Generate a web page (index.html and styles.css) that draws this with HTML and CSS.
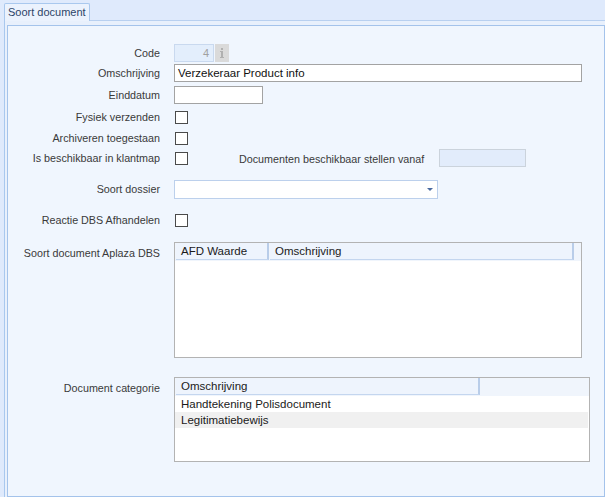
FILE: index.html
```html
<!DOCTYPE html>
<html>
<head>
<meta charset="utf-8">
<link rel="stylesheet" href="styles.css">
</head>
<body>
<div class="tabstrip"><div class="tab">Soort document</div></div>
<div class="outer">
  <div class="panel">
    <div class="row r1">
      <span class="lbl">Code</span>
      <span class="code-input">4</span>
      <span class="info-btn"><svg width="6" height="12" viewBox="0 0 6 12"><rect x="2" y="1" width="2" height="2" fill="#b0b0b0"/><rect x="2" y="4" width="2" height="7" fill="#b0b0b0"/><rect x="1" y="4" width="1" height="1" fill="#b0b0b0"/><rect x="1" y="10" width="4" height="1" fill="#b0b0b0"/></svg></span>
    </div>
    <div class="row r2">
      <span class="lbl">Omschrijving</span>
      <span class="input wide">Verzekeraar Product info</span>
    </div>
    <div class="row r3">
      <span class="lbl">Einddatum</span>
      <span class="input date"></span>
    </div>
    <div class="row r4">
      <span class="lbl">Fysiek verzenden</span>
      <span class="check"></span>
    </div>
    <div class="row r5">
      <span class="lbl">Archiveren toegestaan</span>
      <span class="check"></span>
    </div>
    <div class="row r6">
      <span class="lbl">Is beschikbaar in klantmap</span>
      <span class="check"></span>
      <span class="lbl2">Documenten beschikbaar stellen vanaf</span>
      <span class="input vanaf"></span>
    </div>
    <div class="row r7">
      <span class="lbl">Soort dossier</span>
      <span class="combo"><span class="arrow"></span></span>
    </div>
    <div class="row r8">
      <span class="lbl">Reactie DBS Afhandelen</span>
      <span class="check"></span>
    </div>
    <div class="row top r9">
      <span class="lbl">Soort document Aplaza DBS</span>
      <div class="grid grid-afd">
        <div class="ghead">
          <span class="hcell c-afd">AFD Waarde</span>
          <span class="hcell c-oms">Omschrijving</span>
        </div>
      </div>
    </div>
    <div class="row top r10">
      <span class="lbl">Document categorie</span>
      <div class="grid grid-cat">
        <div class="ghead">
          <span class="hcell c-cat">Omschrijving</span>
        </div>
        <div class="grow">Handtekening Polisdocument</div>
        <div class="grow alt">Legitimatiebewijs</div>
      </div>
    </div>
  </div>
</div>
</body>
</html>
```

FILE: styles.css
```css
* { box-sizing: border-box; }

body {
  margin: 0;
  width: 605px;
  height: 497px;
  overflow: hidden;
  background: #dfeafc;
  font-family: "Liberation Sans", Arial, sans-serif;
  font-size: 11px;
  color: #3a3a3a;
}

.tabstrip {
  height: 20px;
  padding-left: 4px;
  display: flex;
  align-items: flex-end;
}

.tab {
  position: relative;
  z-index: 1;
  width: 86px;
  height: 18px;
  margin-bottom: -1px;
  border: 1px solid #a9c8ee;
  border-bottom: none;
  border-radius: 2px 2px 0 0;
  background: #ebf2fd;
  padding-left: 3px;
  padding-top: 1px;
  line-height: 15px;
  color: #2b4468;
}

.outer {
  margin-left: 4px;
  height: 477px;
  border-top: 1px solid #b8d0f0;
  border-left: 1px solid #a9c8ee;
  padding: 4px 0 0 2px;
  background: #e8f0fc;
}

.panel {
  width: 598px;
  height: 472px;
  border: 1px solid #a4c3eb;
  background: #f0f6fe;
  padding-top: 17px;
  display: flex;
  flex-direction: column;
}

.row {
  display: flex;
  align-items: center;
  height: 20px;
  flex: none;
}

.row.top { align-items: flex-start; }

.lbl {
  width: 152px;
  margin-right: 14px;
  text-align: right;
  white-space: nowrap;
  line-height: 13px;
  font-size: 10.75px;
  padding-top: 1px;
}

.row.top .lbl { padding-top: 5px; }

.r3 { margin-top: 2px; }
.r4 { margin-top: 2px; }
.r5 { margin-top: 1px; }
.r7 { margin-top: 11px; }
.r8 { margin-top: 11px; }
.r9 { margin-top: 12px; height: 116px; }
.r10 { margin-top: 19px; height: 85px; }

.code-input {
  width: 40px;
  height: 18px;
  border: 1px solid #c9d9ef;
  background: #e3eefc;
  color: #a0a0a0;
  text-align: right;
  padding-right: 4px;
  line-height: 16px;
}

.info-btn {
  width: 14px;
  height: 18px;
  margin-left: 1px;
  background: #dadada;
  display: flex;
  align-items: center;
  justify-content: center;
}

.input {
  height: 18px;
  border: 1px solid #a3a3a3;
  background: #fff;
  color: #111;
  padding-left: 3px;
  line-height: 16px;
  font-size: 11.5px;
}

.wide { width: 408px; }
.date { width: 89px; }

.input.vanaf {
  width: 87px;
  border-color: #cbd3dc;
  background: #e2ecfb;
}

.check {
  width: 13px;
  height: 13px;
  margin-left: 1px;
  border: 1px solid #4a4a4a;
  background: #fff;
}

.lbl2 {
  margin-left: 51px;
  width: 200px;
  white-space: nowrap;
  font-size: 10.75px;
  padding-top: 1px;
}

.combo {
  width: 264px;
  height: 19px;
  border: 1px solid #bcd0ec;
  background: #fff;
  display: flex;
  align-items: center;
  justify-content: flex-end;
  padding-right: 4px;
}

.arrow {
  width: 0;
  height: 0;
  border-left: 3px solid transparent;
  border-right: 3px solid transparent;
  border-top: 3px solid #4a6aa0;
}

.grid {
  border: 1px solid #b3b3b3;
  background: #fff;
  color: #1a1a1a;
}

.grid-afd { width: 408px; height: 116px; }
.grid-cat { width: 416px; height: 85px; }

.ghead {
  display: flex;
  height: 18px;
  background: #f0f5fc;
  padding-left: 1px;
}

.hcell {
  height: 17px;
  background: #eef4fd;
  border-bottom: 1px solid #c4d6ef;
  border-right: 2px solid #b9cde9;
  margin-right: 1px;
  padding-left: 5px;
  line-height: 16px;
  font-size: 11.5px;
}

.c-afd { width: 93px; }
.c-oms { width: 304px; }
.c-cat { width: 304px; }

.grow {
  height: 16px;
  line-height: 16px;
  padding-left: 6px;
  margin-right: 1px;
  font-size: 11.5px;
}

.grow.alt { background: #f0f0f0; }
```
